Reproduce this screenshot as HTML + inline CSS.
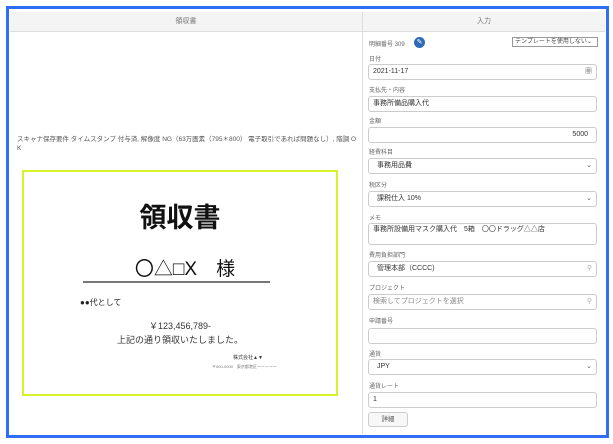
<!DOCTYPE html><html><head><meta charset="utf-8"><style>
*{margin:0;padding:0;box-sizing:border-box}
body{width:613px;height:444px;background:#fff;position:relative;overflow:hidden;font-family:"Liberation Sans","Noto Sans CJK JP",sans-serif;color:#333}
.frame{position:absolute;left:6px;top:6px;width:603px;height:432px;border:3px solid #2f6ef5}
.a{position:absolute}
.hd{position:absolute;top:12px;height:20px;background:#f4f4f4;border-bottom:1px solid #ddd;font-size:7px;color:#777;text-align:center;line-height:20px}
.lb{position:absolute;left:369px;font-size:6px;color:#666}
.in{position:absolute;left:368px;width:229px;height:16px;border:1px solid #ccc;border-radius:3px;font-size:7px;line-height:14px;padding-left:4px;color:#333;background:#fff}
.ch{position:absolute;right:4px;top:0;font-size:7px;color:#555}
</style></head><body>
<div class="frame"></div>
<div class="hd" style="left:10px;width:352px">領収書</div>
<div class="hd" style="left:363px;width:242px">入力</div>
<div class="a" style="left:362px;top:12px;width:1px;height:422px;background:#ddd"></div>
<div class="a" style="left:17px;top:135px;width:340px;font-size:6.5px;color:#555;line-height:9px">スキャナ保存要件 タイムスタンプ 付与済, 解像度 NG（63万画素（795＊800） 電子取引であれば問題なし）, 階調 O K</div>
<div class="a" style="left:22px;top:170px;width:316px;height:226px;border:2px solid #d8f22a;background:#fff"></div>
<div class="a" style="left:22px;top:196px;width:316px;text-align:center;font-size:27px;font-weight:bold;color:#111">領収書</div>
<div class="a" style="left:22px;top:254px;width:316px;text-align:center;font-size:19px;color:#111;padding-left:10px">〇△□X　様</div>
<div class="a" style="left:83px;top:281px;width:187px;height:2px;background:#777"></div>
<div class="a" style="left:80px;top:297px;font-size:8px;color:#222">●●代として</div>
<div class="a" style="left:22px;top:319px;width:316px;text-align:center;font-size:9px;color:#333">￥123,456,789-</div>
<div class="a" style="left:22px;top:333px;width:316px;text-align:center;font-size:9px;color:#333">上記の通り領収いたしました。</div>
<div class="a" style="left:233px;top:354px;font-size:5px;color:#333">株式会社▲▼</div>
<div class="a" style="left:212px;top:364px;font-size:4px;color:#777">〒000-0000　東京都港区ーーーーー</div>

<div class="lb" style="top:39px">明細番号 309</div>
<div class="a" style="left:414px;top:37px;width:11px;height:11px;border-radius:50%;background:#2f6ab8;color:#fff;font-size:7px;line-height:11px;text-align:center">✎</div>
<div class="a" style="left:512px;top:37px;width:86px;height:10px;border:1px solid #999;font-size:6px;line-height:8px;padding-left:2px;color:#444">テンプレートを使用しない⌄</div>
<div class="lb" style="top:54px">日付</div>
<div class="in" style="top:64px">2021-11-17<span class="ch">▦</span></div>
<div class="lb" style="top:85px">支払先・内容</div>
<div class="in" style="top:96px">事務所備品購入代</div>
<div class="lb" style="top:116px">金額</div>
<div class="in" style="top:127px;text-align:right;padding-right:8px">5000</div>
<div class="lb" style="top:147px">経費科目</div>
<div class="in" style="top:158px;padding-left:8px">事務用品費<span class="ch">⌄</span></div>
<div class="lb" style="top:180px">税区分</div>
<div class="in" style="top:191px;padding-left:8px">課税仕入 10%<span class="ch">⌄</span></div>
<div class="lb" style="top:213px">メモ</div>
<div class="in" style="top:223px;height:22px;line-height:10px;padding-top:1px">事務所設備用マスク購入代　5箱　〇〇ドラッグ△△店</div>
<div class="lb" style="top:250px">費用負担部門</div>
<div class="in" style="top:261px;padding-left:8px">管理本部（CCCC)<span class="ch" style="color:#aaa">⚲</span></div>
<div class="lb" style="top:283px">プロジェクト</div>
<div class="in" style="top:294px;color:#888">検索してプロジェクトを選択<span class="ch" style="color:#aaa">⚲</span></div>
<div class="lb" style="top:316px">申請番号</div>
<div class="in" style="top:328px"></div>
<div class="lb" style="top:349px">通貨</div>
<div class="in" style="top:359px;padding-left:8px">JPY<span class="ch">⌄</span></div>
<div class="lb" style="top:381px">通貨レート</div>
<div class="in" style="top:392px">1</div>
<div class="a" style="left:368px;top:412px;width:40px;height:15px;border:1px solid #ccc;border-radius:3px;background:#f7f7f7;font-size:6.5px;line-height:13px;text-align:center;color:#555">詳細</div>
</body></html>
